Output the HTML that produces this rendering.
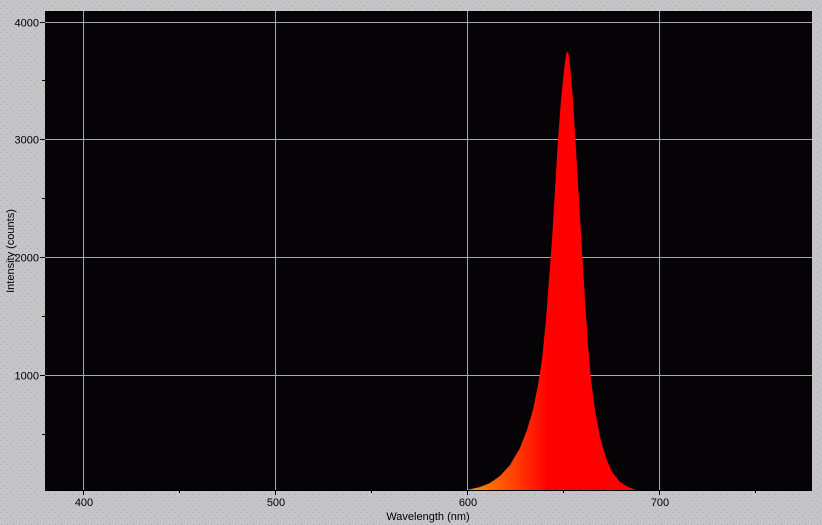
<!DOCTYPE html>
<html><head><style>
html,body{margin:0;padding:0;width:822px;height:525px;overflow:hidden;background:#c4c3c6;}
svg{display:block;font-family:"Liberation Sans",sans-serif;}
</style></head><body>
<svg width="822" height="525" viewBox="0 0 822 525">
<defs>
<pattern id="dots" width="6" height="6" patternUnits="userSpaceOnUse">
<rect width="6" height="6" fill="#c5c4c7"/>
<rect x="1" y="2" width="1" height="1" fill="#a9a8ab"/>
<rect x="4" y="5" width="1" height="1" fill="#b0afb2"/>
</pattern>
<linearGradient id="g" gradientUnits="userSpaceOnUse" x1="470" y1="0" x2="548" y2="0">
<stop offset="0" stop-color="#ff9000"/>
<stop offset="0.5" stop-color="#ff4a00"/>
<stop offset="1" stop-color="#ff0000"/>
</linearGradient>
</defs>
<rect width="822" height="525" fill="url(#dots)"/>
<rect x="45" y="11" width="767" height="479" fill="#050306"/>
<g stroke="#a8a8a8" stroke-width="1">
<line x1="83.5" y1="11" x2="83.5" y2="490"/>
<line x1="275.5" y1="11" x2="275.5" y2="490"/>
<line x1="467.5" y1="11" x2="467.5" y2="490"/>
<line x1="659.5" y1="11" x2="659.5" y2="490"/>
<line x1="45" y1="22.5" x2="812" y2="22.5"/>
<line x1="45" y1="139.5" x2="812" y2="139.5"/>
<line x1="45" y1="257.5" x2="812" y2="257.5"/>
<line x1="45" y1="375.5" x2="812" y2="375.5"/>
</g>
<polygon fill="url(#g)" points="467,490 480,487 490,483 500,476 510,465 520,448 527,430 533,410 538,385 542,360 546,320 549,280 552,240 555,190 558,140 561,100 564,70 566,55 567,51 569,56 571,75 573,100 576,150 579,200 582,250 585,300 588,345 591,380 595,410 600,437 606,458 612,472 620,482 628,487 636,490"/>
<g stroke="#000" stroke-width="1">
<line x1="45" y1="490.5" x2="812" y2="490.5"/>
<line x1="40" y1="22.5" x2="45" y2="22.5"/>
<line x1="40" y1="139.5" x2="45" y2="139.5"/>
<line x1="40" y1="257.5" x2="45" y2="257.5"/>
<line x1="40" y1="375.5" x2="45" y2="375.5"/>
<line x1="42" y1="80.5" x2="45" y2="80.5"/>
<line x1="42" y1="198.5" x2="45" y2="198.5"/>
<line x1="42" y1="316.5" x2="45" y2="316.5"/>
<line x1="42" y1="434.5" x2="45" y2="434.5"/>
<line x1="83.5" y1="490" x2="83.5" y2="495"/>
<line x1="275.5" y1="490" x2="275.5" y2="495"/>
<line x1="467.5" y1="490" x2="467.5" y2="495"/>
<line x1="659.5" y1="490" x2="659.5" y2="495"/>
<line x1="179.5" y1="490" x2="179.5" y2="493"/>
<line x1="371.5" y1="490" x2="371.5" y2="493"/>
<line x1="563.5" y1="490" x2="563.5" y2="493"/>
<line x1="755.5" y1="490" x2="755.5" y2="493"/>
</g>
<g font-size="11" fill="#000">
<text x="39" y="26.5" text-anchor="end">4000</text>
<text x="39" y="143.5" text-anchor="end">3000</text>
<text x="39" y="261.5" text-anchor="end">2000</text>
<text x="39" y="379.5" text-anchor="end">1000</text>
<text x="84" y="506" text-anchor="middle">400</text>
<text x="276" y="506" text-anchor="middle">500</text>
<text x="468" y="506" text-anchor="middle">600</text>
<text x="660" y="506" text-anchor="middle">700</text>
<text x="428" y="520" text-anchor="middle">Wavelength (nm)</text>
<text transform="translate(14,251) rotate(-90)" text-anchor="middle">Intensity (counts)</text>
</g>
</svg>
</body></html>
